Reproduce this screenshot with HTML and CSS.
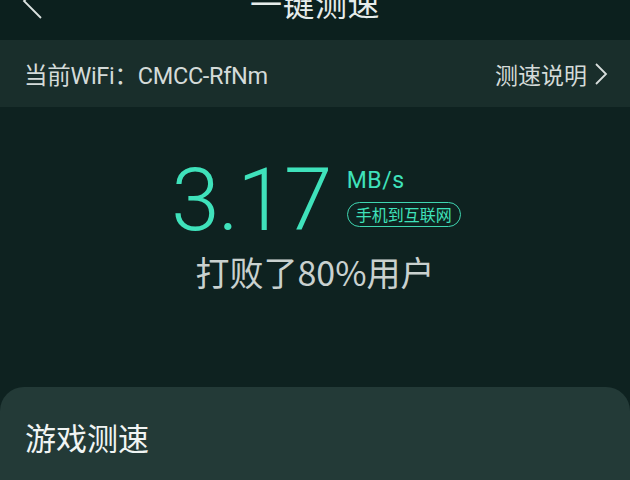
FILE: index.html
```html
<!DOCTYPE html>
<html>
<head>
<meta charset="utf-8">
<link rel="stylesheet" href="styles.css">
</head>
<body>
<div class="page">
  <header class="topbar">
    <svg class="back" width="22" height="24" viewBox="0 0 22 24"><path d="M19 -16 L2 1 L19 18" fill="none" stroke="#dbe2e0" stroke-width="1.8"/></svg>
    <div class="title">一键测速</div>
  </header>
  <div class="wifi">
    <span class="wifi-name">当前WiFi：CMCC-RfNm</span>
    <span class="wifi-help">测速说明
      <svg width="14" height="24" viewBox="0 0 14 24"><path d="M2 2 L12 12 L2 22" fill="none" stroke="#d8dedc" stroke-width="1.8"/></svg>
    </span>
  </div>
  <section class="result">
    <div class="speed-row">
      <span class="speed">3.17</span>
      <div class="unit-col">
        <span class="unit">MB/s</span>
        <span class="pill">手机到互联网</span>
      </div>
    </div>
    <div class="beat">打败了80%用户</div>
  </section>
  <section class="card">
    <div class="card-title">游戏测速</div>
  </section>
</div>
</body>
</html>
```
FILE: styles.css
```css
html, body { margin: 0; padding: 0; }
body {
  width: 630px; height: 480px; overflow: hidden;
  background: #0e2220;
  font-family: "Noto Sans CJK SC", "Roboto", sans-serif;
}
.page { display: flex; flex-direction: column; height: 480px; }
.topbar {
  height: 40px; flex: none; background: #0c201e; position: relative;
  display: flex; justify-content: center; overflow: hidden;
}
.back { position: absolute; left: 22px; top: 0; }
.title {
  color: #e6eceb; font-size: 32px; line-height: 32px; margin-top: -14px;
  letter-spacing: 0.5px;
}
.wifi {
  height: 67px; flex: none; background: #192e2b;
  display: flex; align-items: center; justify-content: space-between;
  padding: 0 22px 0 24px; color: #d4dbd9; font-size: 23.5px;
}
.wifi-name { font-family: "Roboto", "Noto Sans CJK SC", sans-serif; letter-spacing: -0.3px; }
.wifi-help { display: flex; align-items: center; gap: 7px; font-size: 23px; }
.wifi-help svg { margin-top: 1px; }
.result {
  display: flex; flex-direction: column; align-items: center;
  padding-top: 50px; height: 280px; flex: none; box-sizing: border-box;
}
.speed-row { display: flex; align-items: flex-start; gap: 16px; margin-left: 2px; }
.speed {
  font-family: "Roboto", sans-serif; font-weight: 300;
  font-size: 87px; line-height: 87px; color: #3fe2bb; letter-spacing: -1.5px;
}
.unit-col { display: flex; flex-direction: column; align-items: flex-start; padding-top: 11px; }
.unit { font-family: "Roboto", sans-serif; color: #3fe2bb; font-size: 23px; line-height: 26px; letter-spacing: 0.5px; }
.pill {
  margin-top: 8px; border: 1.5px solid #3fd6b1; border-radius: 14px;
  color: #3fe2bb; font-size: 16px; line-height: 23px; padding: 0 8px;
}
.beat { color: #c9d1cf; font-size: 34px; line-height: 40px; margin-top: 8px; }
.card {
  flex: 1; background: #233a37; border-radius: 24px 24px 0 0;
  padding: 32px 25px 0;
}
.card-title { color: #f0f4f3; font-size: 31px; line-height: 36px; }
```
